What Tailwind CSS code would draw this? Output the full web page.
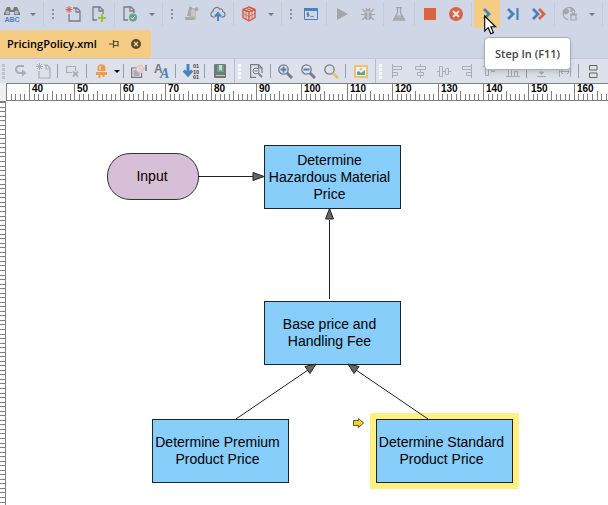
<!DOCTYPE html>
<html lang="en">
<head>
    <meta charset="UTF-8">
    <meta name="viewport" content="width=device-width, initial-scale=1.0">
    <title>PricingPolicy.xml</title>
    <script src="https://cdn.jsdelivr.net/npm/@tailwindcss/browser@4"></script>
</head>
<body class="min-h-screen flex flex-col overflow-hidden bg-[#cfd6e6] font-['Open_Sans',sans-serif]">
    <!-- Main toolbar -->
    <div class="relative z-10 flex h-7 shrink-0 items-center">
        <button aria-label="Spelling" class="flex h-7 w-6 shrink-0 items-center justify-center">
            <svg class="overflow-visible" width="16" height="18" viewBox="0 0 16 18"><path d="M3 2h3l1 3h2l1-3h3l3 6v2h-6V7H6v3H0V8z" fill="#777"/><circle cx="3.500" cy="7.500" r="2" fill="#b5b8c0"/><circle cx="12.500" cy="7.500" r="2" fill="#b5b8c0"/><text x="8" y="17" text-anchor="middle" font-family="Liberation Sans" font-size="7" font-weight="700" fill="#4a82bd">ABC</text></svg>
        </button>
        <button aria-label="More spelling" class="flex h-7 w-[17px] shrink-0 items-center justify-center"><svg width="6" height="3"><path d="M0 0h6L3 3z" fill="#777"/></svg></button>
        <span class="mx-0.5 h-6 w-px shrink-0 bg-[#c3ced3]"></span>
        <span class="flex w-3.5 shrink-0 justify-center"><svg width="2" height="10"><path d="M0 0h2v2H0zM0 4h2v2H0zM0 8h2v2H0z" fill="#8b8f9c"/></svg></span>
        <button aria-label="New" class="flex h-7 w-[26px] shrink-0 items-center justify-center">
            <svg width="16" height="16" viewBox="0 0 16 16" fill="none"><path d="M8 2h4l3 3v10H4V8M11 2v4h4" stroke="#7a7d82" stroke-width="1.300"/><path d="M4 0v7M.5 3.500h7M1.500 1l5 5M6.500 1l-5 5" stroke="#d9593c"/></svg>
        </button>
        <button aria-label="Add" class="flex h-7 w-[26px] shrink-0 items-center justify-center">
            <svg width="16" height="16" viewBox="0 0 16 16" fill="none"><path d="M6 14H2V1h7l3 3v4M8 1v4h4" stroke="#7a7d82" stroke-width="1.300"/><path d="M11 8v8M7 12h8" stroke="#9bbf3b" stroke-width="2"/></svg>
        </button>
        <span class="mx-0.5 h-6 w-px shrink-0 bg-[#c3ced3]"></span>
        <button aria-label="Validate" class="flex h-7 w-[26px] shrink-0 items-center justify-center">
            <svg width="16" height="16" viewBox="0 0 16 16" fill="none"><path d="M6 14H2V1h7l3 3v3M8 1v4h4" stroke="#7a7d82" stroke-width="1.300"/><circle cx="11" cy="11.500" r="4" fill="#64a48f"/><path d="M9 11.500l1.500 1.500 2.500-3" stroke="#fff"/></svg>
        </button>
        <button aria-label="More validation" class="flex h-7 w-[17px] shrink-0 items-center justify-center"><svg width="6" height="3"><path d="M0 0h6L3 3z" fill="#777"/></svg></button>
        <span class="mx-0.5 h-6 w-px shrink-0 bg-[#c3ced3]"></span>
        <span class="flex w-3.5 shrink-0 justify-center"><svg width="2" height="10"><path d="M0 0h2v2H0zM0 4h2v2H0zM0 8h2v2H0z" fill="#8b8f9c"/></svg></span>
        <button aria-label="Script" class="flex h-7 w-[26px] shrink-0 items-center justify-center">
            <svg width="16" height="16" viewBox="0 0 16 16"><path d="M5 2h7v11H5z" fill="#bcbcbc"/><path d="M5 2c0-2 3-2 3 0l-1 8H3zM12 1c3 0 3 4 1 4h-2V3zM1 11h9v2l2 1H2c-1 0-1-2-1-3z" fill="#a9a9a9"/><path d="M7 5h4M7 7h4M7 9h4" stroke="#d5d5d5"/></svg>
        </button>
        <button aria-label="Upload" class="flex h-7 w-[26px] shrink-0 items-center justify-center">
            <svg width="16" height="16" viewBox="0 0 16 16" fill="none"><path d="M5 11H3.500A2.800 2.800 0 0 1 3 5.500C3 2 7.500 0 9.500 3c2-.8 3.500 1 3.200 2.500 3.300 1 2.800 5.500-.2 5.500H11" stroke="#7a7d82" stroke-width="1.200"/><path d="M8 15V9M5 10.500l3-3.500 3 3.500" stroke="#4a82bd" stroke-width="2"/></svg>
        </button>
        <span class="mx-0.5 h-6 w-px shrink-0 bg-[#c3ced3]"></span>
        <button aria-label="Deploy" class="flex h-7 w-[26px] shrink-0 items-center justify-center">
            <svg width="16" height="16" viewBox="0 0 16 16" fill="none" stroke="#d9593c"><path d="M8 1l6 2.500v8L8 15l-6-3.500v-8zM2 3.500L8 6l6-2.500M8 6v9" stroke-width="1.400"/><path d="M2 7.500l6 3 6-3M5 5v8M11 5v8M5 2.200l6 2.500M11 2.200L5 4.700" stroke-width=".8"/></svg>
        </button>
        <button aria-label="More deploy" class="flex h-7 w-[17px] shrink-0 items-center justify-center"><svg width="6" height="3"><path d="M0 0h6L3 3z" fill="#777"/></svg></button>
        <span class="mx-0.5 h-6 w-px shrink-0 bg-[#c3ced3]"></span>
        <span class="flex w-3.5 shrink-0 justify-center"><svg width="2" height="10"><path d="M0 0h2v2H0zM0 4h2v2H0zM0 8h2v2H0z" fill="#8b8f9c"/></svg></span>
        <button aria-label="Console" class="flex h-7 w-[26px] shrink-0 items-center justify-center">
            <svg width="14" height="12" viewBox="0 0 14 12" fill="none"><path d="M.5.500h13v11H.5z" stroke="#4a82bd"/><path d="M0 0h14v3H0z" fill="#4a82bd"/><path d="M5 5H3v1.500h2V8H3M4 4.500v4.500M6.500 8.500h3" stroke="#666" stroke-width=".8"/></svg>
        </button>
        <span class="mx-0.5 h-6 w-px shrink-0 bg-[#c3ced3]"></span>
        <button aria-label="Run" class="flex h-7 w-[26px] shrink-0 items-center justify-center"><svg width="11" height="12"><path d="M0 0l11 6-11 6z" fill="#a3a5a9"/></svg></button>
        <button aria-label="Debug" class="flex h-7 w-[26px] shrink-0 items-center justify-center">
            <svg width="14" height="14" viewBox="0 0 14 14" fill="none"><path d="M1 2l3 3M13 2l-3 3M0 7.500h4M14 7.500h-4M1 13l3-3M13 13l-3-3M5 1l1 2M9 1L8 3" stroke="#a3a5a9" stroke-width="1.200"/><path d="M4 4.500C4 1.500 10 1.500 10 4.500zM3.500 5.500h3V13c-3 0-3-3-3-7.500zM7.500 5.500h3c0 4.500 0 7.500-3 7.500z" fill="#a3a5a9"/></svg>
        </button>
        <span class="mx-0.5 h-6 w-px shrink-0 bg-[#c3ced3]"></span>
        <button aria-label="Test" class="flex h-7 w-[26px] shrink-0 items-center justify-center">
            <svg width="14" height="14" viewBox="0 0 14 14" fill="none" stroke="#a3a5a9"><path d="M4 .7h6M5.500 1v4.500L1.500 13h11L8.500 5.500V1" stroke-width="1.300"/><path d="M4.500 9h5l1.500 2.500H3z" fill="#b8babf"/></svg>
        </button>
        <span class="mx-0.5 h-6 w-px shrink-0 bg-[#c3ced3]"></span>
        <button aria-label="Stop" class="flex h-7 w-[26px] shrink-0 items-center justify-center"><svg width="12" height="12"><path d="M0 0h12v12H0z" fill="#db6343"/></svg></button>
        <button aria-label="Terminate" class="flex h-7 w-[26px] shrink-0 items-center justify-center"><svg width="14" height="14"><circle cx="7" cy="7" r="7" fill="#db6343"/><path d="M4 4l6 6M10 4l-6 6" stroke="#e3e6ee" stroke-width="2"/></svg></button>
        <span class="mx-0.5 h-6 w-px shrink-0 bg-[#c3ced3]"></span>
        <div class="relative shrink-0">
            <button aria-label="Step In" aria-describedby="tip" class="flex h-7 w-[26px] items-center justify-center bg-[#f5cc84]"><svg width="8" height="12" fill="none"><path d="M1 1l5 5-5 5" stroke="#4a82bd" stroke-width="2.800"/></svg></button>
            <div id="tip" role="tooltip" class="absolute left-2.5 top-[37px] rounded border border-[#a9adb8] bg-white px-2.5 py-2 text-[11px] leading-[15px] font-semibold whitespace-nowrap text-[#444] shadow-md">Step In (F11)</div>
            <!-- Mouse pointer -->
            <svg class="absolute left-2.5 top-[15px]" width="13" height="20" viewBox="0 0 13 20"><path d="M.7 1v15l3.500-3.300 2.600 6 2.600-1.100-2.500-5.800h4.700z" fill="#fff" stroke="#000" stroke-width="1.100"/></svg>
        </div>
        <button aria-label="Step Over" class="flex h-7 w-[26px] shrink-0 items-center justify-center"><svg width="12" height="12" fill="none" stroke="#4a82bd"><path d="M1 1l5 5-5 5" stroke-width="2.800"/><path d="M10.500 0v12" stroke-width="2.200"/></svg></button>
        <button aria-label="Continue" class="flex h-7 w-[26px] shrink-0 items-center justify-center"><svg width="14" height="12" fill="none" stroke-width="2.800"><path d="M1 1l5 5-5 5" stroke="#4a82bd"/><path d="M7 1l5 5-5 5" stroke="#db6343"/></svg></button>
        <span class="mx-0.5 h-6 w-px shrink-0 bg-[#c3ced3]"></span>
        <button aria-label="Web" class="flex h-7 w-[26px] shrink-0 items-center justify-center">
            <svg width="16" height="16" viewBox="0 0 16 16" fill="none" stroke="#a3a5a9"><path d="M6 13.500A6 6 0 1 1 13 6" stroke-width="1.300"/><path d="M3 3l3 1 1 2-3 2-2-1zM9 2l3 2-3 2z" fill="#a3a5a9"/><path d="M9 9h5v5H9zM8 8h7M10 7h3" stroke-width="1.200"/></svg>
        </button>
        <button aria-label="More web" class="flex h-7 w-[17px] shrink-0 items-center justify-center"><svg width="6" height="3"><path d="M0 0h6L3 3z" fill="#777"/></svg></button>
        <span class="mx-0.5 h-6 w-px shrink-0 bg-[#c3ced3]"></span>
    </div>

    <!-- Editor tabs -->
    <div class="flex shrink-0 pt-0.5">
        <div class="flex h-7 w-[151px] items-center justify-between bg-[#f5cc84] pr-2.5 pl-[7px]">
            <span class="text-[11px] font-semibold text-black">PricingPolicy.xml</span>
            <button aria-label="Pin"><svg width="10" height="8" fill="none" stroke="#55492f"><path d="M0 4h4M4.500 0v8M4 1.500h5v5M4 5.500h5.500" stroke-width="1.200"/></svg></button>
            <button aria-label="Close"><svg width="10" height="10"><circle cx="5" cy="5" r="5" fill="#55492f"/><path d="M3 3l4 4M7 3L3 7" stroke="#f5cc84" stroke-width="1.500"/></svg></button>
        </div>
    </div>

    <!-- Diagram toolbar -->
    <div class="flex h-[25px] shrink-0 items-center border-t border-[#c0c7d8] bg-[#dde1ec]">
        <span class="flex w-[9px] shrink-0 justify-start pl-0.5"><svg width="3" height="15"><path d="M0 0h3v3H0zM0 4h3v3H0zM0 8h3v3H0zM0 12h3v3H0z" fill="#bfc3ce"/></svg></span>
        <button aria-label="Redo" class="flex h-6 w-[23px] shrink-0 items-center justify-center"><svg width="12" height="12" viewBox="0 0 12 12" fill="none"><path d="M9 1H4.500a3 3 0 0 0 0 7H9" stroke="#aaadb3" stroke-width="2"/><path d="M7 4.500l4.500 3.500L7 11.500z" fill="#aaadb3"/></svg></button>
        <button aria-label="New shape" class="flex h-6 w-[23px] shrink-0 items-center justify-center"><svg width="15" height="16" viewBox="0 0 15 16" fill="none" stroke="#aaadb3"><path d="M8 2h3l3 3v10H3V8M10 2v4h4" stroke-width="1.200"/><path d="M3.500 0v7M0 3.500h7M1 1l5 5M6 1L1 6"/></svg></button>
        <span class="mr-[3px] ml-0.5 h-3.5 w-px shrink-0 bg-[#9a9da6]"></span>
        <button aria-label="Delete shape" class="flex h-6 w-[23px] shrink-0 items-center justify-center"><svg width="13" height="12" viewBox="0 0 13 12" fill="none" stroke="#aaadb3"><path d="M6 7.500H.6v-6h9V6" stroke-width="1.200"/><path d="M7 6.500l5 5M12 6.500l-5 5" stroke-width="1.800"/></svg></button>
        <span class="mr-[3px] ml-0.5 h-3.5 w-px shrink-0 bg-[#9a9da6]"></span>
        <button aria-label="Highlight" class="flex h-6 w-[23px] shrink-0 items-center justify-center"><svg width="11" height="14" viewBox="0 0 11 14" fill="#ee9b52"><path d="M1.500 7V3.500C1.500-1 9.500-1 9.500 3.500V7zM0 8h11v3H0zM2.500 11h2v3h-2zM6.500 11h2v2h-2z"/><path d="M4 2v4" stroke="#f9cf9f" stroke-width="1.500"/></svg></button>
        <button aria-label="More highlight" class="flex h-6 w-2 shrink-0 items-center justify-center"><svg width="6" height="3"><path d="M0 0h6L3 3z" fill="#000"/></svg></button>
        <span class="mr-[3px] ml-0.5 h-3.5 w-px shrink-0 bg-[#9a9da6]"></span>
        <button aria-label="Edit note" class="flex h-6 w-[23px] shrink-0 items-center justify-center"><svg width="16" height="14" viewBox="0 0 16 14" fill="none"><path d="M6 4H.6v9.400h10V9M2.500 7H6M2.500 9h6M2.500 11h6" stroke="#777" stroke-width="1.200"/><path d="M5 6c0-3 3-5 6-4l2 3-2 3H7zM8 4l3 2" stroke="#efb6a9" stroke-width="1.200"/><path d="M15 1v6" stroke="#777" stroke-width="1.500"/></svg></button>
        <button aria-label="Font" class="flex h-6 w-[23px] shrink-0 items-center justify-center"><svg class="overflow-visible" width="14" height="14" viewBox="0 0 14 14"><text x="-1" y="9" font-family="Liberation Sans" font-weight="700" font-size="12" fill="#777">A</text><text x="5" y="14" font-family="Liberation Serif" font-weight="700" font-style="italic" font-size="14" fill="#4a82bd">A</text></svg></button>
        <span class="mr-[3px] ml-0.5 h-3.5 w-px shrink-0 bg-[#9a9da6]"></span>
        <button aria-label="Sort" class="flex h-6 w-[23px] shrink-0 items-center justify-center"><svg class="overflow-visible" width="16" height="15" viewBox="0 0 16 15"><path d="M5 0v9M.8 6.500L5 11l4.200-4.500" fill="none" stroke="#4a82bd" stroke-width="3"/><g font-family="Liberation Sans" font-weight="700" font-size="5.500" fill="#444"><text x="10" y="4">01</text><text x="10" y="9.500">10</text><text x="10" y="15">01</text></g></svg></button>
        <span class="mr-[3px] ml-0.5 h-3.5 w-px shrink-0 bg-[#9a9da6]"></span>
        <button aria-label="Dictionary" class="flex h-6 w-[23px] shrink-0 items-center justify-center"><svg width="12" height="14"><rect width="12" height="14" rx="1" fill="#777"/><path d="M3 1h7v7H3z" fill="#64a48f"/><path d="M5 1h3v6L6.500 5.500 5 7z" fill="#c9dcd5"/><path d="M2 11.500h9" stroke="#c5c5c5"/></svg></button>
        <span class="flex w-3.5 shrink-0 items-center justify-between pr-1 pl-[3px]"><span class="h-6 w-px bg-[#b9bdc9]"></span><svg width="3" height="15"><path d="M0 0h3v3H0zM0 4h3v3H0zM0 8h3v3H0zM0 12h3v3H0z" fill="#f7f8fb"/></svg></span>
        <button aria-label="Preview" class="flex h-6 w-[23px] shrink-0 items-center justify-center"><svg width="13" height="14" viewBox="0 0 13 14" fill="none"><path d="M6 13.400H.6V.6h8L12 4v5M8.500.6V4H12" stroke="#7a7d82" stroke-width="1.200"/><circle cx="6" cy="7" r="3" stroke="#7a7d82"/><path d="M4.500 7h3" stroke="#4a82bd"/><path d="M8.500 9.500l3.500 3.500" stroke="#7a7d82" stroke-width="1.800"/></svg></button>
        <span class="mr-[3px] ml-0.5 h-3.5 w-px shrink-0 bg-[#9a9da6]"></span>
        <button aria-label="Zoom in" class="flex h-6 w-[23px] shrink-0 items-center justify-center"><svg width="15" height="15" fill="none"><circle cx="5.500" cy="5.500" r="4.700" stroke="#7a7d82" stroke-width="1.300"/><path d="M9 9l5 5" stroke="#7a7d82" stroke-width="3"/><path d="M2.500 5.500h6M5.500 2.500v6" stroke="#4a82bd" stroke-width="1.800"/></svg></button>
        <button aria-label="Zoom out" class="flex h-6 w-[23px] shrink-0 items-center justify-center"><svg width="15" height="15" fill="none"><circle cx="5.500" cy="5.500" r="4.700" stroke="#7a7d82" stroke-width="1.300"/><path d="M9 9l5 5" stroke="#7a7d82" stroke-width="3"/><path d="M2.500 5.500h6" stroke="#4a82bd" stroke-width="2"/></svg></button>
        <button aria-label="Zoom" class="flex h-6 w-[23px] shrink-0 items-center justify-center"><svg width="15" height="15" fill="none"><circle cx="5.500" cy="5.500" r="4.700" stroke="#7a7d82" stroke-width="1.300"/><path d="M9 9l5 5" stroke="#e8c06f" stroke-width="3"/></svg></button>
        <span class="mr-[3px] ml-0.5 h-3.5 w-px shrink-0 bg-[#9a9da6]"></span>
        <button aria-label="Image" class="flex h-6 w-[23px] shrink-0 items-center justify-center"><svg width="14" height="13" fill="none"><path d="M1 1h12v11H1z" stroke="#ecc373" stroke-width="2" fill="#eef0f2"/><path d="M3 10V7l2-1 2 2 4-3v5z" fill="#64a48f"/><circle cx="7" cy="4" r="1.500" fill="#ecc373"/></svg></button>
        <span class="flex w-3.5 shrink-0 items-center justify-between pr-1 pl-[3px]"><span class="h-6 w-px bg-[#b9bdc9]"></span><svg width="3" height="15"><path d="M0 0h3v3H0zM0 4h3v3H0zM0 8h3v3H0zM0 12h3v3H0z" fill="#f7f8fb"/></svg></span>
        <button aria-label="Align left" class="flex h-6 w-[23px] shrink-0 items-center justify-center"><svg width="11" height="14" fill="none" stroke="#aaadb3"><path d="M.5 0v14M.5 2.500h9v3h-9M.5 8.500h5v3h-5"/></svg></button>
        <button aria-label="Align center" class="flex h-6 w-[23px] shrink-0 items-center justify-center"><svg width="11" height="14" fill="none" stroke="#aaadb3"><path d="M5.500 0v2M5.500 5.500v3M5.500 11.500V14M.5 2.500h10v3H.5zM2.500 8.500h6v3h-6z"/></svg></button>
        <button aria-label="Align middle" class="flex h-6 w-[23px] shrink-0 items-center justify-center"><svg width="14" height="11" fill="none" stroke="#aaadb3"><path d="M0 5.500h2M5.500 5.500h3M11.500 5.500H14M2.500.5v10h3V.500zM8.500 2.500v6h3v-6z"/></svg></button>
        <button aria-label="Align right" class="flex h-6 w-[23px] shrink-0 items-center justify-center"><svg width="11" height="14" fill="none" stroke="#aaadb3"><path d="M10.500 0v14M10.500 2.500h-9v3h9M10.500 8.500h-5v3h5"/></svg></button>
        <button aria-label="Align top" class="flex h-6 w-[23px] shrink-0 items-center justify-center"><svg width="14" height="11" fill="none" stroke="#aaadb3"><path d="M0 .5h14M2.500.5v9h3v-9M8.500.5v5h3v-5"/></svg></button>
        <button aria-label="Align bottom" class="flex h-6 w-[23px] shrink-0 items-center justify-center"><svg width="14" height="11" fill="none" stroke="#aaadb3"><path d="M0 10.500h14M2.500 10.500v-9h3v9M8.500 10.500v-5h3v5"/></svg></button>
        <span class="mr-[3px] ml-0.5 h-3.5 w-px shrink-0 bg-[#9a9da6]"></span>
        <button aria-label="Same height" class="flex h-6 w-[23px] shrink-0 items-center justify-center"><svg width="9" height="12" fill="none" stroke="#aaadb3"><path d="M0 .5h9M0 11.500h9"/><path d="M2.500 7h4l-2 2.500z" fill="#aaadb3"/></svg></button>
        <button aria-label="Same width" class="flex h-6 w-[23px] shrink-0 items-center justify-center"><svg width="12" height="11" fill="none" stroke="#aaadb3"><path d="M.5 0v11M11.500 0v11M2 5.500h8M4 3L1.500 5.500 4 8M8 3l2.500 2.500L8 8"/></svg></button>
        <span class="mr-[3px] ml-0.5 h-3.5 w-px shrink-0 bg-[#9a9da6]"></span>
        <button aria-label="Distribute" class="flex h-6 w-[23px] shrink-0 items-center justify-center"><svg width="9" height="13" fill="none" stroke="#666"><path d="M.5.500h7.500v4.500H.5zM.5 8h7.500v4.500H.5z"/></svg></button>
    </div>

    <!-- Top ruler -->
    <div class="flex h-[18px] shrink-0 bg-[#f0f0f0] pl-1.5">
        <svg id="ruler" class="h-[18px] w-full border-y border-l border-[#808080] bg-white" font-family="Liberation Sans" font-size="10" font-weight="700" shape-rendering="crispEdges"></svg>
    </div>

    <!-- Diagram -->
    <div class="flex grow bg-white">
        <svg id="gutter" class="w-1.5 shrink-0 self-stretch border-t border-r border-[#808080] bg-white" height="404" shape-rendering="crispEdges"></svg>
        <div class="relative grow font-['Liberation_Sans',sans-serif] text-[14px] leading-[17px] text-black">
            <div class="absolute top-[52px] left-[101px] flex h-[47px] w-[92px] items-center justify-center rounded-[23px] border border-[#333] bg-[#d8bfd8] pr-0.5 text-center">Input</div>
            <div class="absolute top-11 left-[258px] flex h-16 w-[137px] items-center justify-center border border-[#222] bg-[#87cefa] pr-1.5 text-center">Determine<br>Hazardous Material<br>Price</div>
            <div class="absolute top-[200px] left-[258px] flex h-16 w-[137px] items-center justify-center border border-[#222] bg-[#87cefa] pr-1.5 text-center">Base price and<br>Handling Fee</div>
            <div class="absolute top-[318px] left-[146px] flex h-16 w-[137px] items-center justify-center border border-[#222] bg-[#87cefa] pr-1.5 text-center">Determine Premium<br>Product Price</div>
            <div class="absolute top-[318px] left-[370px] flex h-16 w-[137px] items-center justify-center border border-[#222] bg-[#87cefa] pr-1.5 text-center ring-6 ring-[#fff07f]">Determine Standard<br>Product Price</div>
            <!-- Connectors -->
            <svg class="absolute top-0 left-0" width="520" height="400" fill="none" stroke="#222">
                <path d="M192 75.500h55M323.500 198v-79M230 318l72-49M422 318l-72-49"/>
                <g fill="#666">
                    <path d="M247 71.500v8l11-4z"/>
                    <path d="M319.500 118h8l-4-10.500z"/>
                    <path d="M299 265.500l5 7 6-9.500z"/>
                    <path d="M353 265.500l-5 7-6-9.500z"/>
                </g>
            </svg>
            <!-- Current step marker -->
            <svg class="absolute top-[317px] left-[347px]" width="11" height="10"><path d="M.5 2.500h5v-2l5 4.500-5 4.500v-2h-5z" fill="#f5cf2e" stroke="#665522"/></svg>
        </div>
    </div>

    <script>
        const ns = 'http://www.w3.org/2000/svg';
        const step = 4.54;

        function addLine(svg, x1, y1, x2, y2) {
            const line = document.createElementNS(ns, 'path');
            line.setAttribute('d', `M${x1} ${y1}L${x2} ${y2}`);
            line.setAttribute('stroke', '#808080');
            svg.appendChild(line);
        }

        // Horizontal ruler, one tick per unit
        const ruler = document.getElementById('ruler');
        const width = window.innerWidth - 7;
        for (let i = -5; 22.5 + i * step < width; i++) {
            const x = Math.floor(22.5 + i * step) + 0.5;
            const top = i % 10 === 0 ? 0 : i % 5 === 0 ? 7 : 10;
            addLine(ruler, x, top, x, 16);
            if (i % 10 === 0 && x + 20 < width) {
                const text = document.createElementNS(ns, 'text');
                text.setAttribute('x', x + 2.5);
                text.setAttribute('y', 8);
                text.textContent = 40 + i;
                ruler.appendChild(text);
            }
        }

        // Vertical ruler edge
        const gutter = document.getElementById('gutter');
        for (let y = 0.5; y < window.innerHeight; y += step) {
            addLine(gutter, 0, Math.floor(y) + 0.5, 5, Math.floor(y) + 0.5);
        }
    </script>
</body>
</html>
